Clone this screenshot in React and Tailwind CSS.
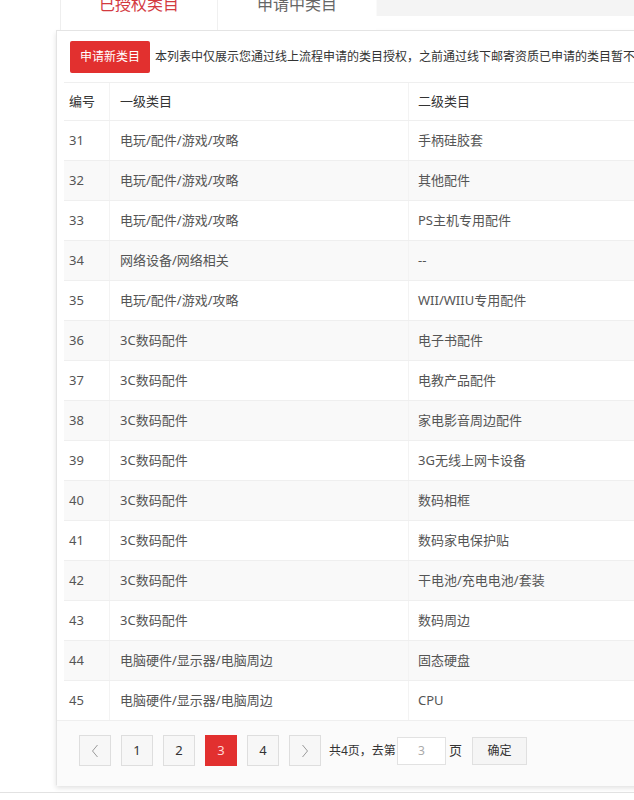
import React from "react";

const rows = [
  ["31", "电玩/配件/游戏/攻略", "手柄硅胶套"],
  ["32", "电玩/配件/游戏/攻略", "其他配件"],
  ["33", "电玩/配件/游戏/攻略", "PS主机专用配件"],
  ["34", "网络设备/网络相关", "--"],
  ["35", "电玩/配件/游戏/攻略", "WII/WIIU专用配件"],
  ["36", "3C数码配件", "电子书配件"],
  ["37", "3C数码配件", "电教产品配件"],
  ["38", "3C数码配件", "家电影音周边配件"],
  ["39", "3C数码配件", "3G无线上网卡设备"],
  ["40", "3C数码配件", "数码相框"],
  ["41", "3C数码配件", "数码家电保护贴"],
  ["42", "3C数码配件", "干电池/充电电池/套装"],
  ["43", "3C数码配件", "数码周边"],
  ["44", "电脑硬件/显示器/电脑周边", "固态硬盘"],
  ["45", "电脑硬件/显示器/电脑周边", "CPU"],
];

const Chevron = ({ dir }) => (
  <svg width="8" height="14" viewBox="0 0 8 14" fill="none">
    <polyline
      points={dir === "left" ? "6.5,1 1.5,7 6.5,13" : "1.5,1 6.5,7 1.5,13"}
      stroke="#9a9a9a"
      strokeWidth="1"
    />
  </svg>
);

const PageBtn = ({ children, active }) => (
  <div
    className={`flex h-[31px] w-[32px] items-center justify-center border text-[13px] ${
      active
        ? "border-[#e2302f] bg-[#e2302f] text-[#ffd6d6]"
        : "border-[#dedede] bg-[#f7f7f7] text-[#333]"
    }`}
  >
    {children}
  </div>
);

export default function App() {
  return (
    <div
      className="h-[800px] overflow-hidden bg-white text-[#555]"
      style={{ fontFamily: "'Noto Sans', 'Noto Sans CJK SC', sans-serif" }}
    >
      {/* tabs */}
      <div className="-mt-[22px] flex h-[52px]">
        <div className="ml-[60px] flex w-[157px] items-center justify-center border-l border-[#eeeeee] bg-white text-[16px] text-[#d33a3f]">
          已授权类目
        </div>
        <div className="flex w-[159px] items-center justify-center border-l border-[#f0f0f0] bg-white text-[16px] text-[#666]">
          申请中类目
        </div>
        <div className="flex-1">
          <div className="h-[38px] border-l border-[#fafafa] bg-[#f4f4f4]"></div>
        </div>
      </div>

      {/* card */}
      <div className="ml-[56px] h-[755px] w-[720px] border-l border-t border-[#e4e4e4] bg-white shadow-[0_3px_5px_rgba(0,0,0,0.12)]">
        <div className="flex h-[51px] items-center pl-[13px]">
          <button className="h-[32px] rounded-[2px] bg-[#e2302f] px-[10px] text-[12px] text-white">
            申请新类目
          </button>
          <span className="ml-[5px] whitespace-nowrap text-[12px] text-[#333]">
            本列表中仅展示您通过线上流程申请的类目授权，之前通过线下邮寄资质已申请的类目暂不展示
          </span>
        </div>

        <div className="ml-[7px] text-[13px]">
          <div className="flex h-[38px] items-center border-t border-[#efefef] text-[#333]">
            <div className="w-[45px] pl-[5px]">编号</div>
            <div className="flex h-full w-[299px] items-center border-l border-[#f3f3f3] pl-[10px]">
              一级类目
            </div>
            <div className="flex h-full flex-1 items-center border-l border-[#f3f3f3] pl-[9px]">
              二级类目
            </div>
          </div>
          {rows.map((r, i) => (
            <div
              key={r[0]}
              className={`flex h-[40px] items-center border-t border-[#efefef] ${
                i % 2 === 1 ? "bg-[#f9f9f9]" : "bg-white"
              }`}
            >
              <div className="w-[45px] pl-[5px]">{r[0]}</div>
              <div className="flex h-full w-[299px] items-center border-l border-[#f3f3f3] pl-[10px]">
                {r[1]}
              </div>
              <div className="flex h-full flex-1 items-center border-l border-[#f3f3f3] pl-[9px]">
                {r[2]}
              </div>
            </div>
          ))}
        </div>

        {/* pagination */}
        <div className="flex h-[66px] items-start border-t border-[#efefef] bg-[#fbfbfb] pl-[22px] pt-[14px]">
          <div className="flex items-center gap-[10px]">
            <PageBtn>
              <Chevron dir="left" />
            </PageBtn>
            <PageBtn>1</PageBtn>
            <PageBtn>2</PageBtn>
            <PageBtn active>3</PageBtn>
            <PageBtn>4</PageBtn>
            <PageBtn>
              <Chevron dir="right" />
            </PageBtn>
          </div>
          <div className="ml-[8px] flex h-[31px] items-center text-[12px] text-[#333]">
            共4页，去第
            <div className="ml-[1px] flex h-[28px] w-[49px] items-center justify-center border border-[#e2e2e2] bg-white text-[#aaa]">
              3
            </div>
            <span className="ml-[3px] text-[13px]">页</span>
            <div className="ml-[10px] flex h-[28px] w-[55px] items-center justify-center border border-[#e0e0e0] bg-[#f5f5f5] text-[12px] text-[#333]">
              确定
            </div>
          </div>
        </div>
      </div>

      <div className="mt-[7px] border-t border-[#e2e2e2]"></div>
    </div>
  );
}
